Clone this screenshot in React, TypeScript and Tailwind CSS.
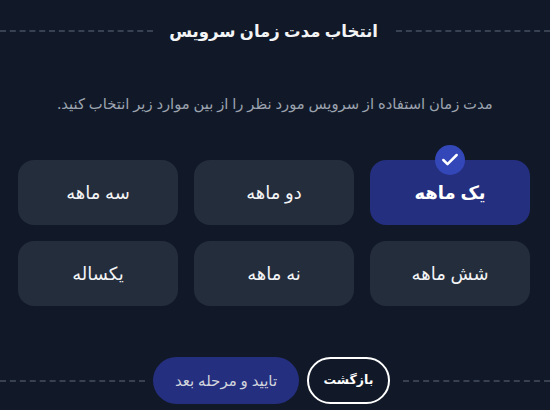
import { Check } from "lucide-react";

const DURATIONS = ["یک ماهه", "دو ماهه", "سه ماهه", "شش ماهه", "نه ماهه", "یکساله"];

export default function App() {
  return (
    <div dir="rtl" className="flex h-[410px] w-[550px] flex-col overflow-hidden bg-[#111928] font-['Noto_Sans','DejaVu_Sans',sans-serif]">
      {/* Header */}
      <div className="mt-[18px] flex h-[26px] items-center">
        <div className="w-[154px] border-t-2 border-dashed border-[#374151]" />
        <h1 className="ps-[18px] pe-4 text-[16.5px] font-bold leading-[26px] whitespace-nowrap text-gray-100">انتخاب مدت زمان سرویس</h1>
        <div className="flex-1 border-t-2 border-dashed border-[#374151]" />
      </div>
      <p className="mt-[49px] text-center text-[14.75px] leading-5 text-[#9ca3af]">مدت زمان استفاده از سرویس مورد نظر را از بین موارد زیر انتخاب کنید.</p>

      {/* Options */}
      <div className="mt-[47px] grid grid-cols-3 gap-4 ps-5 pe-[18px]">
        {DURATIONS.map((label, i) => (
          <button
            key={label}
            className={`relative h-[65px] rounded-2xl text-[18px] ${i === 0 ? "bg-[#252f80] font-bold text-white" : "bg-[#242d3c] font-medium text-gray-100"}`}
          >
            {label}
            {i === 0 && (
              <span className="absolute -top-[15px] left-1/2 flex h-[30px] w-[30px] -translate-x-1/2 items-center justify-center rounded-full bg-[#3347b8]">
                <Check size={20} strokeWidth={3} className="text-white" />
              </span>
            )}
          </button>
        ))}
      </div>

      {/* Footer */}
      <div className="mt-[51px] flex items-center">
        <div className="w-[147px] border-t-2 border-dashed border-[#374151]" />
        <div className="ms-[13px] me-2 flex items-center gap-2">
          <button className="h-[47px] w-[83px] rounded-full border-2 border-white text-[12.5px] font-bold text-white">بازگشت</button>
          <button className="h-[47px] w-[146px] rounded-full bg-[#252f80] text-[15px] font-medium text-gray-300">تایید و مرحله بعد</button>
        </div>
        <div className="flex-1 border-t-2 border-dashed border-[#374151]" />
      </div>
    </div>
  );
}
